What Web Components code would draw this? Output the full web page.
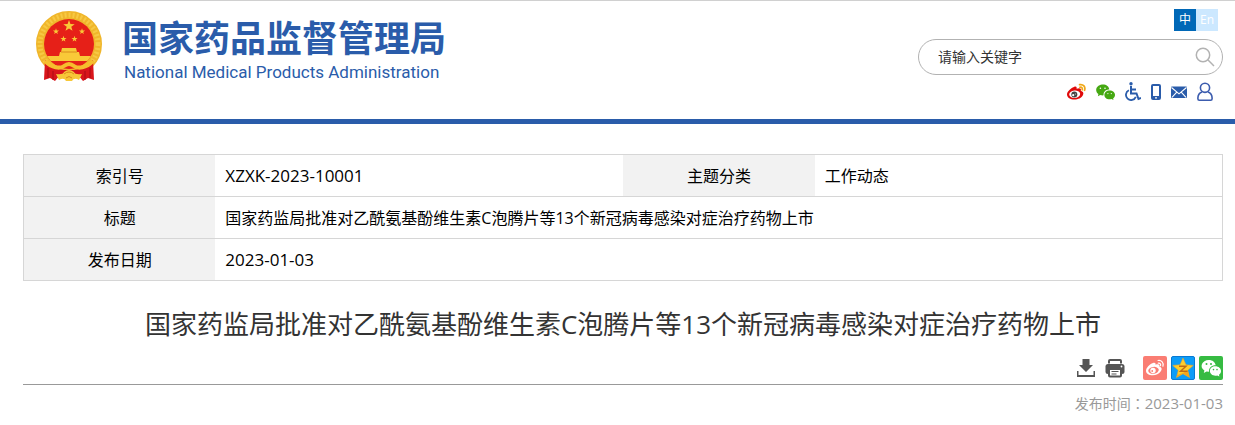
<!DOCTYPE html>
<html lang="zh-CN">
<head>
  <meta charset="UTF-8">
  <meta name="viewport" content="width=device-width, initial-scale=1.0">
  <title>国家药品监督管理局</title>
  <style>
    body {
      margin: 0;
      background: #fff;
      color: #000;
      font-family: "Open Sans", "Noto Sans CJK SC", sans-serif;
      font-size: 16px;
      --blue: #2a5caa;
      --line: #d6d6d6;
    }
  </style>
</head>
<body>
  <site-header>
    <site-logo slot="logo"></site-logo>
    <lang-switch slot="tools"></lang-switch>
    <search-box slot="tools"></search-box>
    <quick-links slot="tools"></quick-links>
  </site-header>
  <article-page>
    <info-table></info-table>
    <article-title>国家药监局批准对乙酰氨基酚维生素C泡腾片等13个新冠病毒感染对症治疗药物上市</article-title>
    <share-bar></share-bar>
    <publish-time>2023-01-03</publish-time>
  </article-page>

  <script>
    const star = (x, y, r) => {
      const points = [];
      for (let i = 0; i < 10; i++) {
        const radius = i % 2 ? r * 0.4 : r;
        const angle = Math.PI * (i / 5 - 0.5);
        points.push((x + radius * Math.cos(angle)).toFixed(2) + ',' + (y + radius * Math.sin(angle)).toFixed(2));
      }
      return `<polygon points="${points.join(' ')}"/>`;
    };

    const icons = {
      weiboColor: `<svg width="19" height="20" viewBox="0 0 19 20">
        <path fill="#e00a0a" d="M7 5C8.800 4 10 4.700 9.600 6.800C12.500 5.700 14.500 6.300 13.800 8.700C16 9.300 17 11 16 13C14.700 16 11 17.500 7.500 17.500C3.300 17.500 0 15.500 0 12.500C0 9.700 3.600 6.400 7 5Z"/>
        <ellipse cx="7.700" cy="12.200" rx="5.500" ry="3.700" fill="#fff" transform="rotate(-6 7.700 12.200)"/>
        <circle cx="7.300" cy="12.500" r="3" fill="#444"/><circle cx="6.200" cy="13.200" r="1.100" fill="#fff"/><circle cx="8.300" cy="12" r=".5" fill="#fff"/>
        <path d="M12.600 2.700C16.400 1.900 18.700 4.800 17.600 8.300M12.900 5.300C14.800 4.900 15.700 6.100 15.200 7.800" fill="none" stroke="#f0a818" stroke-width="1.700" stroke-linecap="round"/></svg>`,
      wechatColor: `<svg width="19" height="20" viewBox="0 0 19 20">
        <path fill="#45a812" d="M6.800 2.500C10.500 2.500 13 4.500 13.300 7.500C9.500 7.500 7.200 10 7.600 13.300C6.200 13.500 5.200 13.300 4.200 13L1.900 14.300L2.400 12.100C-2 9 .5 2.500 6.800 2.500Z"/>
        <path fill="#45a812" d="M13.500 8.500C16.800 8.500 19 10.500 19 13C19 14.500 18.200 15.600 17.100 16.400L17.500 18L15.500 17.100C11.500 18.100 8.400 16 8.400 13C8.400 10.400 10.600 8.500 13.500 8.500Z"/>
        <g fill="#fff"><circle cx="4.400" cy="6.300" r=".8"/><circle cx="9" cy="6.300" r=".8"/><circle cx="11.900" cy="11.600" r=".6"/><circle cx="15.300" cy="11.600" r=".6"/></g></svg>`,
      wheelchair: `<svg width="16" height="20" viewBox="0 0 16 20" fill="none" stroke="#2a5caa" stroke-width="2">
        <circle cx="6" cy="1.700" r="1.700" fill="#2a5caa" stroke="none"/>
        <path d="M6 4V11.500H11.500L13.500 17L16 16M6 7.500H11"/><path d="M3.900 8.300A5.100 5.100 0 1 0 10.800 14.800" stroke-width="1.800"/></svg>`,
      phone: `<svg width="10" height="20" viewBox="0 0 10 20"><path fill="#2a5caa" fill-rule="evenodd" d="M2 2H8Q10 2 10 4V16Q10 18 8 18H2Q0 18 0 16V4Q0 2 2 2ZM2 4V14H8V4ZM4 15.200V16.500H6V15.200Z"/></svg>`,
      mail: `<svg width="16" height="20" viewBox="0 0 16 20"><rect y="4.500" width="16" height="11.500" rx="1" fill="#2a5caa"/>
        <path d="M.5 5.500L8 11.800L15.500 5.500M1 15.300L5.800 10.200M15 15.300L10.200 10.200" fill="none" stroke="#fff" stroke-width="1.100"/></svg>`,
      user: `<svg width="16" height="20" viewBox="0 0 16 20" fill="none" stroke="#3c5cae" stroke-width="1.600"><circle cx="8" cy="5.800" r="4.600"/>
        <path d="M5 10C2.500 11 .9 13 .9 16V16.800Q.9 18.200 2.300 18.200H13.700Q15.100 18.200 15.100 16.800V16C15.100 13 13.500 11 11 10"/></svg>`,
      search: `<svg width="20" height="20" viewBox="0 0 20 20" fill="none" stroke="#b2b2b2" stroke-width="1.500"><circle cx="8" cy="8" r="6.700"/><path d="M12.800 12.800L19 19"/></svg>`,
      download: `<svg width="18" height="24" viewBox="0 0 18 24" fill="#555"><path d="M5.500 3H12.500V9H16L9 16L2 9H5.500Z"/><path d="M0 15H1.500V19H16.500V15H18V21H0Z"/></svg>`,
      print: `<svg width="20" height="24" viewBox="0 0 20 24"><path d="M4 7.500V5Q4 4 5 4H15Q16 4 16 5V7.500" fill="none" stroke="#555" stroke-width="2"/>
        <rect x=".5" y="8" width="19" height="10" rx="2.500" fill="#555"/><rect x="4" y="13" width="12" height="7.500" rx="1" fill="#fff" stroke="#555" stroke-width="2"/>
        <path d="M6.500 15.500H13.500M6.500 18H11.500" stroke="#555" stroke-width="1.200"/><circle cx="16.500" cy="10.500" r=".9" fill="#fff"/></svg>`,
      weibo: `<svg width="24" height="24" viewBox="0 0 24 24"><rect width="24" height="24" rx="2" fill="#fa7d73"/>
        <path fill="#fff" d="M10 7C11.800 6.300 13 7 12.500 8.800C15 7.800 17 8.300 16.400 10.500C18.700 11.300 19.300 13 18 15C16 18 13 19.300 9.800 19.300C6 19.300 3 17.500 3 14.700C3 12 6.500 8.300 10 7Z"/>
        <ellipse cx="10.500" cy="14.300" rx="5.300" ry="3.400" fill="#fa7d73" transform="rotate(-8 10.500 14.300)"/><circle cx="10" cy="14.500" r="2.700" fill="#fff"/><circle cx="9.200" cy="15" r=".9" fill="#fa7d73"/>
        <path d="M15 4.500C18.500 3.800 21 7 19.900 10.200M15.300 7.200C17.200 6.900 18 8.200 17.500 9.700" fill="none" stroke="#fff" stroke-width="1.200" stroke-linecap="round"/></svg>`,
      qzone: `<svg width="24" height="24" viewBox="0 0 24 24"><rect x=".5" y=".5" width="23" height="23" rx="1.500" fill="#0c9cf8" stroke="#0879d2"/>
        <path fill="#ffce2e" stroke="#f0a020" stroke-width=".5" d="M12 2L15 8.700L22.300 9.400L16.800 14.300L18.500 21.500L12 17.800L5.500 21.500L7.200 14.300L1.700 9.400L9 8.700Z"/>
        <path fill="#f4a51d" d="M16.800 14.300L18.500 21.500L12 17.800L5.500 21.500L6 19.200Q12 17.500 16.800 14.300Z"/>
        <path d="M8 10.300H15L9.500 15.200H16.500" fill="none" stroke="#c06a14" stroke-width="1.400"/></svg>`,
      wechat: `<svg width="24" height="24" viewBox="0 0 24 24"><rect width="24" height="24" rx="2" fill="#36bb42"/>
        <path fill="#fff" d="M9.800 4C13.500 4 16.200 6.200 16.700 9.300C12.500 9.300 9.700 11.800 10 15.700L7.500 15.400L4.800 16.900L5.400 14.500C0 11 3 4 9.800 4Z"/>
        <path fill="#fff" d="M16.300 10.300C19.700 10.300 22 12.500 22 15C22 16.700 21.200 17.900 20 18.800L20.400 20.500L18.200 19.500C14.200 20.500 10.900 18 10.900 15C10.900 12.300 13.300 10.300 16.300 10.300Z"/>
        <g fill="#36bb42"><circle cx="7.500" cy="8" r="1"/><circle cx="12" cy="8" r="1"/><circle cx="14.500" cy="13.600" r=".8"/><circle cx="18" cy="13.600" r=".8"/></g></svg>`
    };

    const define = (name, html) => customElements.define(name, class extends HTMLElement {
      constructor() {
        super();
        this.attachShadow({ mode: 'open' }).innerHTML = html;
      }
    });

    define('site-header', /*html*/ `
      <style>
        :host {
          display: block;
          border-top: 1px solid #d0d0d0;
          border-bottom: 5px solid var(--blue);
        }
        header {
          display: flex;
          justify-content: space-between;
          align-items: flex-start;
          padding: 8px 12px 17px 36px;
        }
        .tools {
          display: flex;
          flex-direction: column;
          align-items: flex-end;
        }
      </style>
      <header>
        <slot name="logo"></slot>
        <div class="tools"><slot name="tools"></slot></div>
      </header>
    `);

    define('site-logo', /*html*/ `
      <style>
        :host { display: block; }
        a {
          display: flex;
          gap: 20px;
          padding-top: 2px;
          color: var(--blue);
          text-decoration: none;
        }
        svg { display: block; }
        .name {
          display: flex;
          flex-direction: column;
          gap: 4px;
          padding-top: 5px;
        }
        strong {
          font: bold 36px/40px "Noto Sans CJK SC", sans-serif;
        }
        .en {
          padding-left: 2px;
          font: 17px/24px Roboto, sans-serif;
        }
      </style>
      <a href="#">
        <svg width="66" height="71" viewBox="0 0 66 71" role="img" aria-label="国徽">
          <defs><clipPath id="disc"><circle cx="33" cy="33" r="25"/></clipPath></defs>
          <circle cx="33" cy="33" r="29" fill="#f6bd2d" stroke="#f0b62b" stroke-width="8"/>
          <circle cx="33" cy="33" r="29" fill="none" stroke="#ffdf62" stroke-width="5" stroke-dasharray="2 2" opacity=".45"/>
          <circle cx="33" cy="33" r="25" fill="#e62018"/>
          <g fill="#f9c938">
            ${star(33, 15, 6)}${star(20, 20.5, 3.2)}${star(46, 20.5, 3.2)}${star(27.5, 28, 3.2)}${star(38.500, 28, 3.2)}
            <path d="M26 37H40L41 41H43L44 45H23L24 41H25Z"/>
            <g clip-path="url(#disc)"><path d="M7 45H59V50H7Z"/></g>
          </g>
          <path d="M25 41H41" stroke="#d98b1d"/>
          <path fill="#d9151b" d="M9 49Q17 57 28 59L38 59Q49 57 57 49L58 69L52 67L47 70L42 64H24L19 70L14 67L8 69Z"/>
          <path fill="none" stroke="#f6be2e" stroke-width="4" d="M9 50C16 57 24 58 28 55Q33 51 38 55C42 58 50 57 57 50"/>
          <path fill="#f7c838" d="M20 63Q27 64 28 61Q33 57 38 61Q39 64 46 63L43 69Q38 66 36 70H30Q28 66 23 69Z"/>
          <path fill="none" stroke="#d98819" d="M28 63Q33 59 38 63M30 67Q33 64 36 67"/>
          <path fill="none" stroke="#a90c14" d="M12 57V67M17 60V69M54 57V67M49 60V69"/>
        </svg>
        <span class="name">
          <strong>国家药品监督管理局</strong>
          <span class="en">National Medical Products Administration</span>
        </span>
      </a>
    `);

    define('lang-switch', /*html*/ `
      <style>
        :host {
          display: flex;
          margin-right: 5px;
        }
        a {
          width: 22px;
          background: #cce8ff;
          color: #fff;
          font-size: 12px;
          line-height: 22px;
          text-align: center;
          text-decoration: none;
        }
        .on { background: #0068b7; }
      </style>
      <a class="on" href="#">中</a><a href="#">En</a>
    `);

    define('search-box', /*html*/ `
      <style>
        :host {
          display: block;
          margin-top: 8px;
        }
        form {
          display: flex;
          align-items: center;
          box-sizing: border-box;
          width: 305px;
          height: 36px;
          padding: 0 7px 0 19px;
          border: 1px solid #b2b2b2;
          border-radius: 18px;
        }
        input {
          flex: 1;
          min-width: 0;
          padding: 0;
          border: 0;
          outline: 0;
          background: none;
          font: 14px/20px "Open Sans", "Noto Sans CJK SC", sans-serif;
        }
        input::placeholder { color: #333; }
        button {
          display: flex;
          padding: 0;
          border: 0;
          background: none;
          cursor: pointer;
        }
      </style>
      <form>
        <input type="text" placeholder="请输入关键字" aria-label="请输入关键字">
        <button type="button" aria-label="搜索">${icons.search}</button>
      </form>
    `);

    define('quick-links', /*html*/ `
      <style>
        :host {
          display: flex;
          gap: 10px;
          margin: 7px 10px 0 0;
        }
        a, svg { display: block; }
      </style>
      <a href="#" aria-label="微博">${icons.weiboColor}</a>
      <a href="#" aria-label="微信">${icons.wechatColor}</a>
      <a href="#" aria-label="无障碍">${icons.wheelchair}</a>
      <a href="#" aria-label="手机版">${icons.phone}</a>
      <a href="#" aria-label="邮箱">${icons.mail}</a>
      <a href="#" aria-label="个人中心">${icons.user}</a>
    `);

    define('article-page', /*html*/ `
      <style>
        :host {
          display: block;
          padding: 30px 12px 8px 23px;
        }
      </style>
      <main><slot></slot></main>
    `);

    define('info-table', /*html*/ `
      <style>
        :host { display: block; }
        table {
          width: 100%;
          table-layout: fixed;
          border: 1px solid var(--line);
          border-collapse: collapse;
        }
        .key { width: 16%; }
        tr { border-bottom: 1px solid var(--line); }
        th, td {
          height: 41px;
          padding: 0 10px;
          font-weight: normal;
          line-height: 24px;
        }
        th {
          background: #f2f2f2;
          text-align: center;
        }
        td { text-align: left; }
        /* latin figures run narrow beside the Chinese text */
        .num { font-size: 17px; }
      </style>
      <table>
        <colgroup><col class="key"><col><col class="key"><col></colgroup>
        <tr>
          <th scope="row">索引号</th><td class="num">XZXK-2023-10001</td>
          <th scope="row">主题分类</th><td>工作动态</td>
        </tr>
        <tr>
          <th scope="row">标题</th>
          <td colspan="3">国家药监局批准对乙酰氨基酚维生素C泡腾片等13个新冠病毒感染对症治疗药物上市</td>
        </tr>
        <tr>
          <th scope="row">发布日期</th><td class="num" colspan="3">2023-01-03</td>
        </tr>
      </table>
    `);

    define('article-title', /*html*/ `
      <style>
        :host { display: block; }
        h2 {
          margin: 24px 0 12px;
          color: #333;
          font-size: 26px;
          font-weight: normal;
          line-height: 39px;
          text-align: center;
        }
      </style>
      <h2><slot></slot></h2>
    `);

    define('share-bar', /*html*/ `
      <style>
        :host {
          display: flex;
          justify-content: flex-end;
          gap: 18px;
          padding-bottom: 4px;
          border-bottom: 1px solid #999;
        }
        div { display: flex; }
        .page { gap: 10px; }
        .share { gap: 4px; }
        button {
          padding: 0;
          border: 0;
          background: none;
          cursor: pointer;
        }
        a, svg { display: block; }
      </style>
      <div class="page">
        <button type="button" aria-label="下载">${icons.download}</button>
        <button type="button" aria-label="打印">${icons.print}</button>
      </div>
      <div class="share">
        <a href="#" aria-label="分享到微博">${icons.weibo}</a>
        <a href="#" aria-label="分享到QQ空间">${icons.qzone}</a>
        <a href="#" aria-label="分享到微信">${icons.wechat}</a>
      </div>
    `);

    define('publish-time', /*html*/ `
      <style>
        :host {
          display: block;
          margin-top: 7px;
          color: #999;
          font-size: 14px;
          line-height: 22px;
          text-align: right;
        }
        /* the traditional face centres the colon in its cell */
        .colon { font-family: "Noto Sans CJK TC", sans-serif; }
        time { font-size: 15px; }
      </style>
      发布时间<span class="colon" lang="zh-Hant">：</span><time><slot></slot></time>
    `);
  </script>
</body>
</html>
